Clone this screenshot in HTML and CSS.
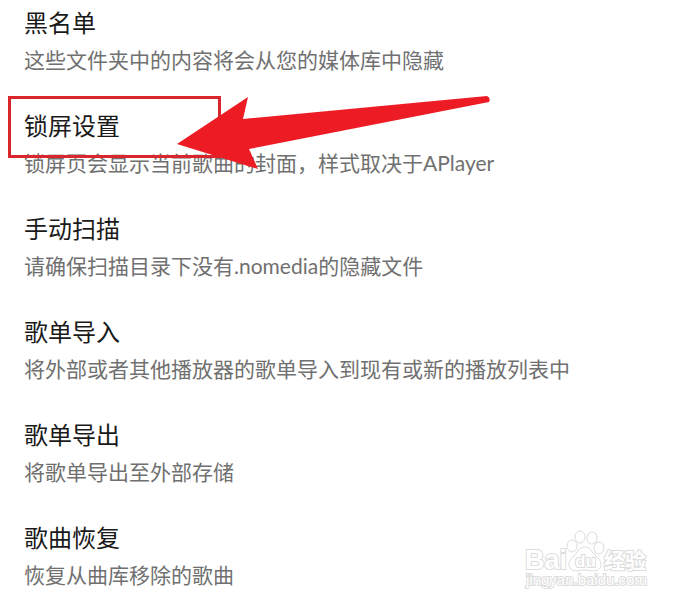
FILE: index.html
```html
<!DOCTYPE html>
<html lang="zh-CN">

<head>
  <meta charset="UTF-8">
  <meta name="viewport" content="width=device-width, initial-scale=1">
  <title>设置</title>
  <link rel="stylesheet" href="styles.css">
</head>

<body>
  <main class="content">
    <ul class="settings">
      <li class="item">
        <button class="setting" type="button">
          <span class="title">黑名单</span>
          <span class="desc">这些文件夹中的内容将会从您的媒体库中隐藏</span>
        </button>
      </li>
      <li class="item">
        <button class="setting" type="button">
          <span class="title">锁屏设置</span>
          <span class="desc">锁屏页会显示当前歌曲的封面，样式取决于APlayer</span>
        </button>
        <div class="marker"></div>
        <svg class="arrow" width="314" height="74" viewBox="0 0 314 74" aria-hidden="true">
          <path d="M0 48 L71 1 L66 23 L310 0 Q314 2 312 6 L72 53 L81 73 Z" fill="#ed1c24"/>
        </svg>
      </li>
      <li class="item">
        <button class="setting" type="button">
          <span class="title">手动扫描</span>
          <span class="desc">请确保扫描目录下没有.nomedia的隐藏文件</span>
        </button>
      </li>
      <li class="item">
        <button class="setting" type="button">
          <span class="title">歌单导入</span>
          <span class="desc">将外部或者其他播放器的歌单导入到现有或新的播放列表中</span>
        </button>
      </li>
      <li class="item">
        <button class="setting" type="button">
          <span class="title">歌单导出</span>
          <span class="desc">将歌单导出至外部存储</span>
        </button>
      </li>
      <li class="item">
        <button class="setting" type="button">
          <span class="title">歌曲恢复</span>
          <span class="desc">恢复从曲库移除的歌曲</span>
        </button>
      </li>
    </ul>

    <svg class="watermark" width="130" height="68" viewBox="0 0 130 68">
      <g class="outline">
        <text class="brand" x="3" y="39">Bai</text>
        <!-- paw -->
        <ellipse cx="50" cy="16" rx="5" ry="6"/>
        <ellipse cx="58" cy="7" rx="5" ry="6"/>
        <ellipse cx="70" cy="8" rx="5" ry="6" transform="rotate(12 70 8)"/>
        <ellipse cx="77" cy="18" rx="5" ry="6" transform="rotate(12 77 18)"/>
        <path d="M63 17 C57 17 56 22 52 26 C47 30 46 35 48 38 C51 43 57 40 63 40 C69 40 75 43 78 38 C80 35 79 30 74 26 C69 22 69 17 63 17 Z"/>
        <text class="du" x="53" y="37">du</text>
        <text class="name" x="82" y="38">经验</text>
        <text class="site" x="4" y="55">jingyan.baidu.com</text>
      </g>
    </svg>
  </main>
</body>

</html>
```
FILE: styles.css
```css
body {
  margin: 0;
  background-color: #fff;
  font-family: Lato, "Noto Sans CJK SC", sans-serif;
}

.content {
  position: relative;
  padding: 7px 24px 8px;
}

.settings {
  margin: 0;
  padding: 0;
  list-style: none;
  display: flex;
  flex-direction: column;
  gap: 35px;
}

.item {
  position: relative;
}

.setting {
  width: 100%;
  padding: 0;
  border: none;
  background: none;
  font-family: inherit;
  text-align: left;
  display: flex;
  flex-direction: column;
  gap: 6px;
  cursor: pointer;
}

.title {
  color: #1a1a1a;
  font-size: 24px;
  line-height: 32px;
}

.desc {
  color: #707070;
  font-size: 21px;
  line-height: 30px;
}

/* red box and arrow over the lock screen row */
.marker {
  position: absolute;
  top: -14px;
  left: -16px;
  width: 207px;
  height: 56px;
  border: 3px solid #d9262c;
  pointer-events: none;
}

.arrow {
  position: absolute;
  top: -14px;
  left: 153px;
  pointer-events: none;
}

.watermark {
  position: absolute;
  right: 34px;
  bottom: 0;
  pointer-events: none;
}

.outline {
  fill: #fff;
  stroke: #dcdcdc;
  stroke-width: 1;
}

.outline text {
  font-family: "Liberation Sans", "Noto Sans CJK SC", sans-serif;
  font-weight: bold;
  paint-order: stroke;
  stroke-width: 2;
}

.brand {
  font-size: 27px;
}

.du {
  font-size: 17px;
}

.name {
  font-size: 21px;
}

.outline .site {
  font-size: 15px;
  font-weight: normal;
}
```
